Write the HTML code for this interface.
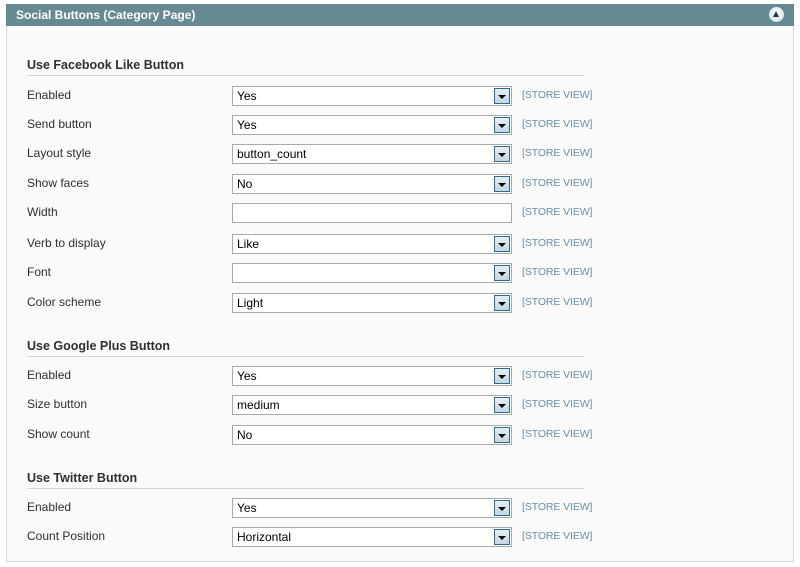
<!DOCTYPE html>
<html><head><style>
body{margin:0;width:800px;height:567px;background:#fff;font-family:"Liberation Sans",Arial,sans-serif;font-size:12px;color:#2f2f2f;position:relative;overflow:hidden}
.hd{position:absolute;left:6px;top:4px;width:788px;height:22px;background:#668a91;color:#fff;font-weight:bold;font-size:12px;line-height:22px}
.hd span{margin-left:10px}
.tog{position:absolute;right:10px;top:3px;width:15px;height:15px;border-radius:50%;background:radial-gradient(circle at 50% 40%,#fff,#cfd8db);}
.tog:after{content:"";position:absolute;left:4px;top:4px;border-left:3.5px solid transparent;border-right:3.5px solid transparent;border-bottom:6px solid #234;}
.bd{position:absolute;left:6px;top:26px;width:786px;height:535px;background:#fafafa;border:1px solid #d6d6d6;border-top:none}
.sec{position:absolute;left:27px;width:558px;font-weight:bold;font-size:12.5px;color:#2f2f2f;border-bottom:1px solid #d6d6d6;height:18px;line-height:16px}
.lb{position:absolute;left:27px;line-height:14px}
.sel{position:absolute;left:232px;width:278px;height:18px;border:1px solid #aaa;background:#fff;line-height:18px;box-sizing:content-box}
.sel span{margin-left:4px;color:#000}
.sel i{position:absolute;right:1px;top:1px;width:14px;height:14px;border:1px solid #2c6e8e;background:linear-gradient(#e6eef3,#c4d6e2)}
.sel i:after{content:"";position:absolute;left:3px;top:6px;border-left:4px solid transparent;border-right:4px solid transparent;border-top:4px solid #000}
.sv{position:absolute;left:522px;font-size:10.5px;color:#6a8fa5;line-height:14px;letter-spacing:-0.1px}
</style></head><body>
<div class="hd"><span>Social Buttons (Category Page)</span><div class="tog"></div></div>
<div class="bd"></div>

<div class="sec" style="top:57px">Use Facebook Like Button</div>
<div class="lb" style="top:88px">Enabled</div><div class="sel" style="top:86px"><span>Yes</span><i></i></div><div class="sv" style="top:88px">[STORE VIEW]</div>
<div class="lb" style="top:117px">Send button</div><div class="sel" style="top:115px"><span>Yes</span><i></i></div><div class="sv" style="top:117px">[STORE VIEW]</div>
<div class="lb" style="top:146px">Layout style</div><div class="sel" style="top:144px"><span>button_count</span><i></i></div><div class="sv" style="top:146px">[STORE VIEW]</div>
<div class="lb" style="top:176px">Show faces</div><div class="sel" style="top:174px"><span>No</span><i></i></div><div class="sv" style="top:176px">[STORE VIEW]</div>
<div class="lb" style="top:205px">Width</div><div class="sel" style="top:203px"></div><div class="sv" style="top:205px">[STORE VIEW]</div>
<div class="lb" style="top:236px">Verb to display</div><div class="sel" style="top:234px"><span>Like</span><i></i></div><div class="sv" style="top:236px">[STORE VIEW]</div>
<div class="lb" style="top:265px">Font</div><div class="sel" style="top:263px"><span></span><i></i></div><div class="sv" style="top:265px">[STORE VIEW]</div>
<div class="lb" style="top:295px">Color scheme</div><div class="sel" style="top:293px"><span>Light</span><i></i></div><div class="sv" style="top:295px">[STORE VIEW]</div>

<div class="sec" style="top:338px">Use Google Plus Button</div>
<div class="lb" style="top:368px">Enabled</div><div class="sel" style="top:366px"><span>Yes</span><i></i></div><div class="sv" style="top:368px">[STORE VIEW]</div>
<div class="lb" style="top:397px">Size button</div><div class="sel" style="top:395px"><span>medium</span><i></i></div><div class="sv" style="top:397px">[STORE VIEW]</div>
<div class="lb" style="top:427px">Show count</div><div class="sel" style="top:425px"><span>No</span><i></i></div><div class="sv" style="top:427px">[STORE VIEW]</div>

<div class="sec" style="top:470px">Use Twitter Button</div>
<div class="lb" style="top:500px">Enabled</div><div class="sel" style="top:498px"><span>Yes</span><i></i></div><div class="sv" style="top:500px">[STORE VIEW]</div>
<div class="lb" style="top:529px">Count Position</div><div class="sel" style="top:527px"><span>Horizontal</span><i></i></div><div class="sv" style="top:529px">[STORE VIEW]</div>
</body></html>
